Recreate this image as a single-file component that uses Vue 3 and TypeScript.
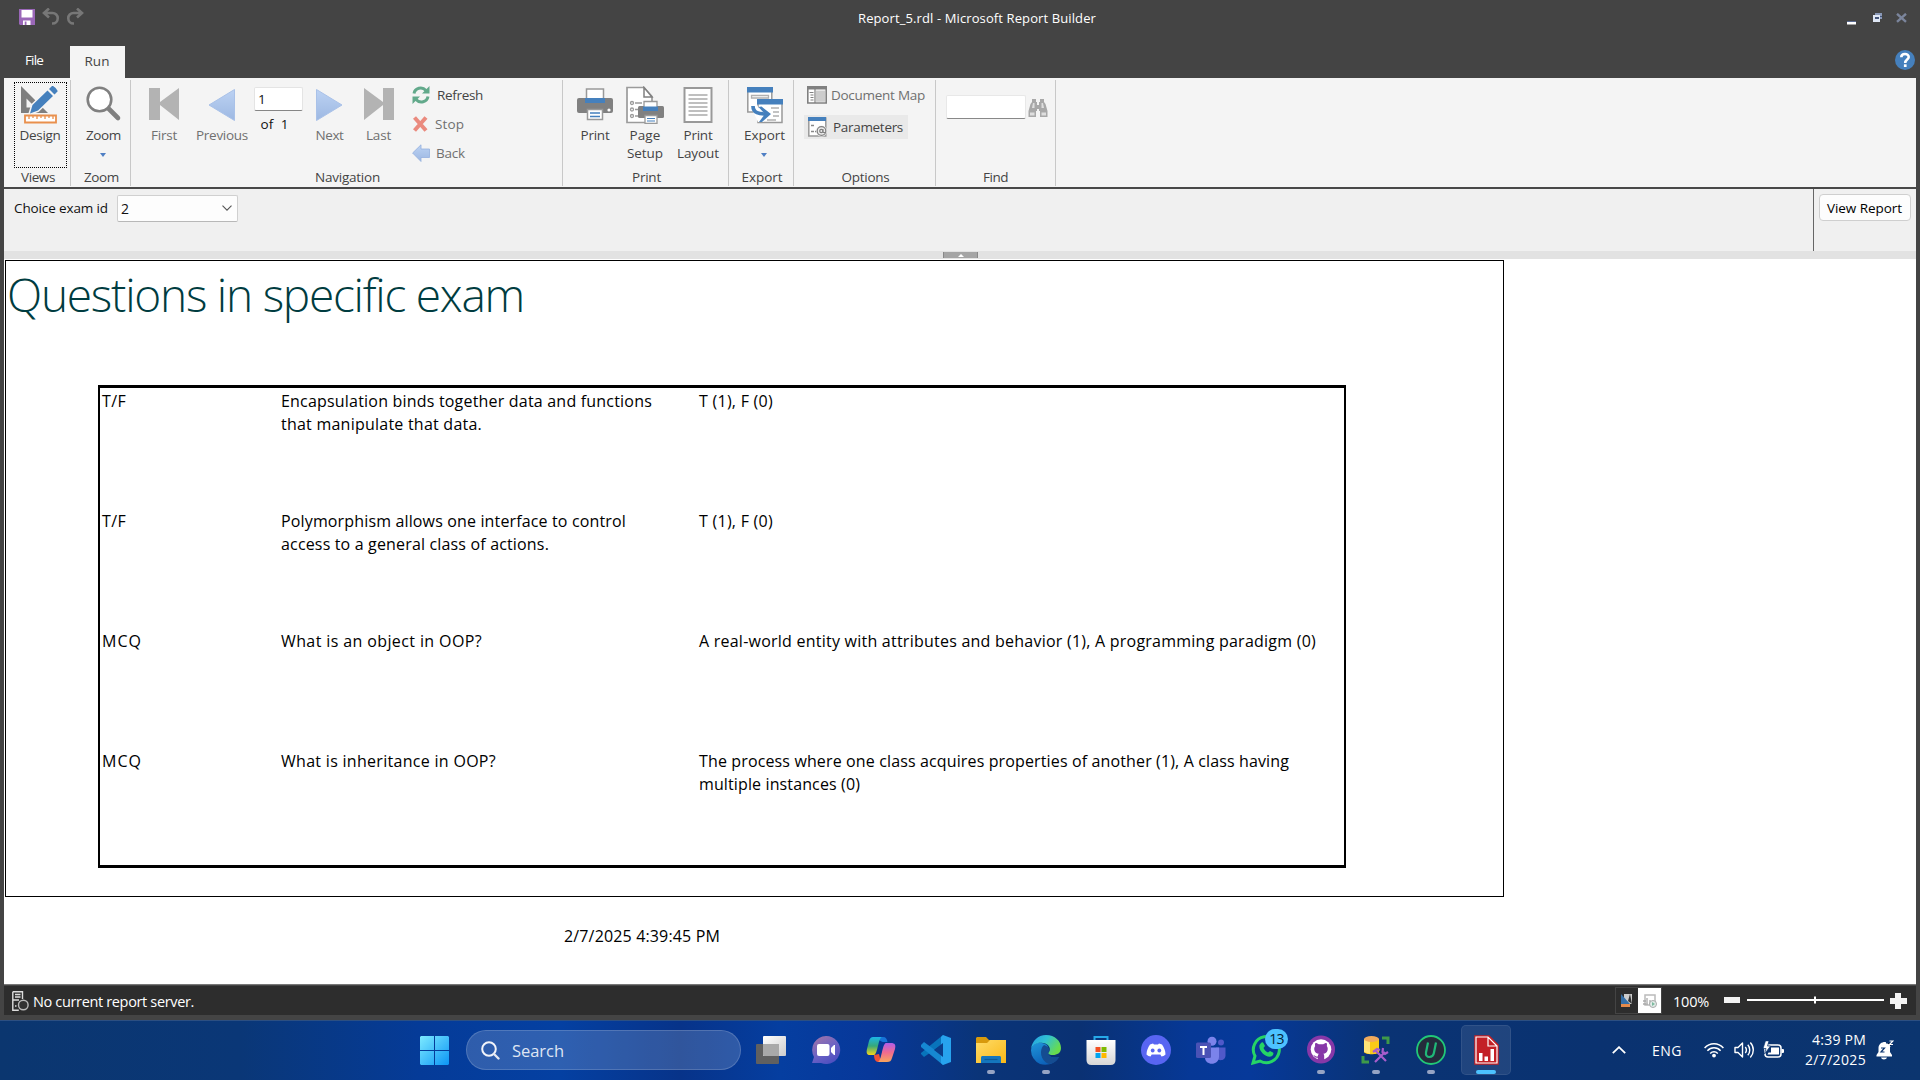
<script setup lang="ts">
interface ReportRow {
  kind: string
  kindWidth: number
  question: [string, number][]
  answers: [string, number][]
}

// Adjusts tracking so that a label occupies its design width in any fallback font.
const vFit = {
  mounted(el: HTMLElement, binding: { value: number }) {
    const count = (el.textContent ?? '').length
    if (!count) return
    const spacing = (binding.value - el.getBoundingClientRect().width) / count
    el.style.letterSpacing = `${spacing.toFixed(3)}px`
  },
}

const pageCount = 'of\u00a0 1'

const rows: ReportRow[] = [
  {
    kind: 'T/F', kindWidth: 24,
    question: [['Encapsulation binds together data and functions', 371], ['that manipulate that data.', 201]],
    answers: [['T (1), F (0)', 74]],
  },
  {
    kind: 'T/F', kindWidth: 24,
    question: [['Polymorphism allows one interface to control', 345], ['access to a general class of actions.', 268]],
    answers: [['T (1), F (0)', 74]],
  },
  {
    kind: 'MCQ', kindWidth: 40,
    question: [['What is an object in OOP?', 201]],
    answers: [['A real-world entity with attributes and behavior (1), A programming paradigm (0)', 617]],
  },
  {
    kind: 'MCQ', kindWidth: 40,
    question: [['What is inheritance in OOP?', 215]],
    answers: [['The process where one class acquires properties of another (1), A class having', 590], ['multiple instances (0)', 161]],
  },
]
</script>

<template>
  <div class="screen">
    <div class="window">
      <header class="titlebar">
        <div class="quick">
          <svg class="save" width="16" height="16" viewBox="0 0 16 16"><path fill="#9a67b8" d="M0 0h16v16H1l-1-1z"/><path fill="#fff" d="M2.500 1h11v7.500h-11zM4 11.500h7.500V16H4z"/><path fill="#9a67b8" d="M5.700 12.500h1.800V16H5.700z"/></svg>
          <svg class="undo" width="18" height="17" viewBox="0 0 18 17"><path fill="none" stroke="#777" stroke-width="2.600" d="M2 5h8.500a5 5 0 0 1 0 10.500H10M7 .5L2 5l5 4.500"/></svg>
          <svg class="redo" width="18" height="17" viewBox="0 0 18 17"><path fill="none" stroke="#777" stroke-width="2.600" d="M16 5H7.500a5 5 0 0 0 0 10.500H8M11 .5L16 5l-5 4.500"/></svg>
        </div>
        <div class="caption"><span v-fit="238" class="t">Report_5.rdl - Microsoft Report Builder</span></div>
        <svg class="winbtns" width="62" height="14" viewBox="0 0 62 14">
          <path fill="#5a6a90" d="M0 8h9v1H0z"/><path fill="#fff" d="M0 9h9v2.500H0z"/>
          <path fill="#8a99b8" d="M28 0h7v6h-7z"/><path fill="#dfe7f5" d="M26 2h7v7h-7z"/><path fill="#445579" d="M28 4h4v2h-4zM33 3h2v1h-2z"/>
          <path fill="none" stroke="#7b859c" stroke-width="2.400" d="M50 .8l9 8M59 .8l-9 8"/>
        </svg>
      </header>

      <nav class="tabs">
        <div class="tab file"><span v-fit="18" class="t">File</span></div>
        <div class="tab run"><span v-fit="25" class="t">Run</span></div>
        <svg class="help" width="20" height="20" viewBox="0 0 20 20"><circle cx="10" cy="10" r="10" fill="#4580bd"/><path fill="none" stroke="#fff" stroke-width="2.600" d="M6.300 7.300C6.300 3 13.700 3 13.700 7c0 2.600-3.500 2.600-3.500 6"/><path fill="#fff" d="M8.900 14.300h2.700V17H8.900z"/></svg>
      </nav>

      <section class="ribbon">
        <div class="group views">
          <div class="body">
            <div class="btn design">
              <svg width="40" height="38" viewBox="0 0 40 38"><path fill="#7f7f7f" fill-rule="evenodd" d="M1 0l27 27H1zM6.500 12.500v9h9z"/><path fill="#4580bd" stroke="#f4f4f4" stroke-width="3" paint-order="stroke" d="M10 27.500l2.500-8.500L27.500 4.500l5.500 5.500-15 14.500zM29 3L32 0c1-1 6.500 4.500 5.500 5.500L34.500 8.500z"/><path fill="#fff" stroke="#e9904d" stroke-width="1.800" d="M5 29.500h31v7H5z"/><path stroke="#e9904d" stroke-width="1.300" d="M9 30v3M13 30v2M17 30v3M21 30v2M25 30v3M29 30v2M33 30v3"/></svg>
              <span v-fit="41" class="t">Design</span>
            </div>
          </div>
          <div class="label"><span v-fit="34" class="t">Views</span></div>
        </div>

        <div class="group zoom">
          <div class="body">
            <div class="btn">
              <svg width="36" height="38" viewBox="0 0 36 38"><path stroke="#808080" stroke-width="4.600" stroke-linecap="round" d="M22 22l10 10"/><circle cx="13.500" cy="13.500" r="11.800" fill="#fff" stroke="#808080" stroke-width="2.600"/></svg>
              <span v-fit="35" class="t">Zoom</span>
              <svg class="drop" width="6" height="4" viewBox="0 0 6 4"><path fill="#4f7fc4" d="M0 0h6L3 4z"/></svg>
            </div>
          </div>
          <div class="label"><span v-fit="35" class="t">Zoom</span></div>
        </div>

        <div class="group navigation">
          <div class="body">
            <div class="btn off first">
              <svg width="30" height="38" viewBox="0 0 30 38"><path fill="#b3b3b3" d="M0 2h11v14L30 2v32L11 19v15H0z"/></svg>
              <span v-fit="26" class="t">First</span>
            </div>
            <div class="btn off previous">
              <svg width="28" height="38" viewBox="0 0 28 38"><defs><linearGradient id="tri" x2="0" y2="1"><stop stop-color="#bcd2f3"/><stop offset="1" stop-color="#9db8e2"/></linearGradient></defs><path fill="url(#tri)" stroke="#a9c1e8" d="M1 19L26.500 3.500v31z"/></svg>
              <span v-fit="52" class="t">Previous</span>
            </div>
            <div class="pager">
              <div class="page-input">1</div>
              <span v-fit="28" class="t count">{{ pageCount }}</span>
            </div>
            <div class="btn off next">
              <svg width="28" height="38" viewBox="0 0 28 38"><path fill="url(#tri)" stroke="#a9c1e8" d="M26 19L.5 3.500v31z"/></svg>
              <span v-fit="28" class="t">Next</span>
            </div>
            <div class="btn off last">
              <svg width="30" height="38" viewBox="0 0 30 38"><path fill="#b3b3b3" d="M30 2H19v14L0 2v32l19-15v15h11z"/></svg>
              <span v-fit="25" class="t">Last</span>
            </div>
            <div class="side">
              <div class="line">
                <svg width="18" height="18" viewBox="0 0 18 18"><g fill="none" stroke="#62a98b" stroke-width="3"><path d="M2 7.500C3 2 10 0 14 4.500M16 10.500C15 16 8 18 4 13.500"/></g><path fill="#62a98b" d="M17.500 0v7.500H10zM.5 18v-7.500H8z"/></svg>
                <span v-fit="46" class="t refresh">Refresh</span>
              </div>
              <div class="line off">
                <svg width="18" height="18" viewBox="0 0 18 18"><path fill="none" stroke="#ea8a7e" stroke-width="4" d="M2.500 2.500l11.500 13M14 2.500l-11.500 13"/></svg>
                <span v-fit="29" class="t stop">Stop</span>
              </div>
              <div class="line off">
                <svg width="18" height="18" viewBox="0 0 18 18"><path fill="url(#tri)" stroke="#94b0de" stroke-width=".8" d="M.6 9L9 .8V5h8.500v8.500H9v4z"/></svg>
                <span v-fit="29" class="t back">Back</span>
              </div>
            </div>
          </div>
          <div class="label"><span v-fit="65" class="t">Navigation</span></div>
        </div>

        <div class="group print">
          <div class="body">
            <div class="btn p1">
              <svg width="36" height="38" viewBox="0 0 36 38"><rect y="12" width="36" height="15" rx="2" fill="#808080"/><path fill="#fff" stroke="#999" stroke-width="1.500" d="M9.500 3h17v11h-17z"/><path fill="#4580bd" d="M8 12h20v5H8z"/><path fill="#fff" stroke="#999" stroke-width="1.500" d="M10.500 23.500h15v10h-15z"/><path stroke="#4580bd" stroke-width="1.400" d="M13 27h10M13 30.500h10"/><circle cx="32" cy="24" r="1.600" fill="#fff"/></svg>
              <span v-fit="29" class="t">Print</span>
            </div>
            <div class="btn p2">
              <svg width="38" height="38" viewBox="0 0 38 38"><path fill="#fff" stroke="#9b9b9b" stroke-width="1.700" d="M1 1.500h17l8 9v26H1z"/><path fill="#fff" stroke="#808080" stroke-width="1.500" d="M18 1.500v9.500h8z"/><g fill="#fff" stroke="#9b9b9b" stroke-width="1.300"><circle cx="6" cy="17" r="1.500"/><circle cx="6" cy="23.500" r="1.500"/><circle cx="6" cy="30" r="1.500"/><path d="M9 17h7M9 23.500h5M9 30h5"/></g><rect x="12" y="20" width="26" height="12" rx="1.500" fill="#808080"/><path fill="#fff" stroke="#999" stroke-width="1.300" d="M18 15.500h13v8H18z"/><path fill="#4580bd" d="M17 20.500h15V25H17z"/><path fill="#fff" stroke="#999" stroke-width="1.300" d="M19 29.500h12v8H19z"/><path stroke="#4580bd" stroke-width="1.200" d="M21 32.500h8M21 35h8"/></svg>
              <span v-fit="31" class="t">Page</span>
              <span v-fit="36" class="t">Setup</span>
            </div>
            <div class="btn p3">
              <svg width="30" height="38" viewBox="0 0 30 38"><path fill="#fff" stroke="#999" stroke-width="2" d="M1.500 2h27v34h-27z"/><path stroke="#aaa" stroke-width="1.500" d="M5.500 9h19M5.500 13h19M5.500 17h19M5.500 21h19M5.500 25h19M5.500 29h19"/></svg>
              <span v-fit="29" class="t">Print</span>
              <span v-fit="42" class="t">Layout</span>
            </div>
          </div>
          <div class="label"><span v-fit="29" class="t">Print</span></div>
        </div>

        <div class="group export">
          <div class="body">
            <div class="btn">
              <svg width="36" height="38" viewBox="0 0 36 38"><path fill="#fff" stroke="#999" stroke-width="1.500" d="M.8 2h24v24H.8z"/><path fill="#4580bd" d="M0 1h26v5.500H0z"/><path fill="none" stroke="#b0b0b0" stroke-width="1.300" d="M4.500 9.500h17V12h-17z"/><path fill="#fff" stroke="#999" stroke-width="1.500" d="M11 14h24v22.500H11z"/><path fill="#4580bd" d="M10 13h26v5.500H10z"/><path stroke="#b0b0b0" stroke-width="1.500" d="M24 22h8M26 26h6M26 30h6M20 34h9"/><path fill="#fff" d="M3 19h7l3 5 5-4 6 8-8 8h-5z"/><path fill="none" stroke="#4580bd" stroke-width="3.700" d="M6 20c0 7 6 8 14 8"/><path fill="#4580bd" d="M14.500 20.500L24 28l-9 8h-3l6-8-6.500-7z"/></svg>
              <span v-fit="41" class="t">Export</span>
              <svg class="drop" width="6" height="4" viewBox="0 0 6 4"><path fill="#4f7fc4" d="M0 0h6L3 4z"/></svg>
            </div>
          </div>
          <div class="label"><span v-fit="41" class="t">Export</span></div>
        </div>

        <div class="group options">
          <div class="body">
            <div class="opt off">
              <svg width="20" height="18" viewBox="0 0 20 18"><path fill="#fff" stroke="#808080" stroke-width="1.600" d="M.8 1h18.400v16H.8z"/><path fill="#808080" d="M0 0h20v3.500H0z"/><path fill="#ccc" d="M9 4.500h9v11.300H9z"/><path fill="none" stroke="#808080" stroke-width="1.200" d="M8 3v14M2.500 6.500h4M3.500 9h3M3.500 11.500h3M3.500 14h3"/></svg>
              <span v-fit="94" class="t">Document Map</span>
            </div>
            <div class="opt on">
              <svg width="19" height="20" viewBox="0 0 19 20"><path fill="#fff" stroke="#999" stroke-width="1.500" d="M.8 1h17v18H.8z"/><path fill="#4580bd" d="M0 0h18v4H0z"/><path stroke="#888" stroke-width="1.500" d="M3 8.500h3M3 14.500h3M7 14.500h2"/><circle cx="13.500" cy="14" r="5.500" fill="#ececec"/><circle cx="13.500" cy="14" r="4.300" fill="none" stroke="#808080" stroke-width="1.200"/><circle cx="13.300" cy="14" r="1.600" fill="none" stroke="#808080" stroke-width="1.200"/><path fill="none" stroke="#808080" d="M15 12v3.500h2"/></svg>
              <span v-fit="70" class="t">Parameters</span>
            </div>
          </div>
          <div class="label"><span v-fit="48" class="t">Options</span></div>
        </div>

        <div class="group find">
          <div class="body">
            <div class="find-input"></div>
            <svg class="bino" width="20" height="18" viewBox="0 0 20 18"><path fill="#a8a8a8" d="M4 0h4v3h1v3h2V3h1V0h4v3l1.500 2L19.500 12v6H12v-6h-1v-2H9v2H8v6H.5v-6L2.500 5 4 3z"/><path fill="#dedede" d="M2 13.500h4.500v3H2zM13.500 13.500H18v3h-4.500zM5 4h1.500v5H4zM13.500 4H15l1 5h-2.500z"/></svg>
          </div>
          <div class="label"><span v-fit="25" class="t">Find</span></div>
        </div>
      </section>

      <section class="params">
        <div class="param-fields">
          <div class="name"><span v-fit="94" class="t">Choice exam id</span></div>
          <div class="select"><span>2</span><svg width="10" height="6" viewBox="0 0 10 6"><path fill="none" stroke="#555" stroke-width="1.100" d="M.5.6L5 5.200 9.500.6"/></svg></div>
        </div>
        <div class="param-action"><button class="view"><span v-fit="75" class="t">View Report</span></button></div>
      </section>
      <div class="splitter"><div class="grip"><svg width="6" height="3" viewBox="0 0 6 3"><path fill="#fff" d="M3 0l3 3H0z"/></svg></div></div>

      <main class="canvas">
        <article class="page">
          <h1><span v-fit="517" class="t">Questions in specific exam</span></h1>
          <div class="grid">
            <div v-for="(row, i) in rows" :key="i" class="row">
              <div class="kind"><span v-fit="row.kindWidth" class="t">{{ row.kind }}</span></div>
              <div class="question"><div v-for="[text, width] in row.question" :key="text"><span v-fit="width" class="t">{{ text }}</span></div></div>
              <div class="answers"><div v-for="[text, width] in row.answers" :key="text"><span v-fit="width" class="t">{{ text }}</span></div></div>
            </div>
          </div>
        </article>
        <div class="stamp"><span v-fit="156" class="t">2/7/2025 4:39:45 PM</span></div>
      </main>

      <footer class="status">
        <svg class="server" width="17" height="20" viewBox="0 0 17 20"><path fill="none" stroke="#ddd" stroke-width="1.400" d="M.8.800h9.700V8M.8.800v18.400h6M3 3.500h5.500M3 6h5.500M1 9h6M3 15h1.500"/><circle cx="11.300" cy="14" r="4.800" fill="#333" stroke="#bbb" stroke-width="1.400"/></svg>
        <span v-fit="161" class="t">No current report server.</span>
        <div class="modes">
          <div class="mode"><svg width="12" height="14" viewBox="0 0 12 14"><path fill="#ccc" d="M3 0h8v10H3z"/><path fill="#356fa8" d="M0 0l9 10H0z"/><path fill="#e48a4b" d="M0 10h9v3H0z"/><path fill="#333" d="M9 0l2 10-4-3z"/></svg></div>
          <div class="mode active"><svg width="14" height="14" viewBox="0 0 14 14"><path fill="#fff" stroke="#bbb" stroke-width="1.500" d="M2 1h10v10H2z"/><path stroke="#aaa" stroke-width="1.300" d="M0 7h3M4 4v5M7 6v4M0 10h5"/><circle cx="10" cy="10" r="3.500" fill="#e2ece8" stroke="#aaa"/><path fill="#7dba9f" d="M9 8l3 2-3 2z"/></svg></div>
        </div>
        <span v-fit="36" class="t pct">100%</span>
        <svg class="slider" width="183" height="16" viewBox="0 0 183 16"><path fill="#f3f3f3" d="M0 4h16v6H0zM166 5h5V0h6v5h6v6h-6v5h-6v-5h-5z"/><path fill="#fff" d="M23 6h137v2H23zM90 3.500h2v7h-2z"/></svg>
      </footer>
    </div>

    <div class="taskbar">
      <svg class="start" width="29" height="29" viewBox="0 0 29 29"><defs><linearGradient id="win" x2="1" y2="1"><stop stop-color="#7deaff"/><stop offset="1" stop-color="#0c95f5"/></linearGradient></defs><path fill="url(#win)" d="M1 0h13v14H0V1zM15 0h13l1 1v13H15zM0 15h14v14H1l-1-1zM15 15h14v13l-1 1H15z"/></svg>
      <div class="search">
        <svg width="19" height="19" viewBox="0 0 19 19"><circle cx="8" cy="8" r="6.800" fill="none" stroke="#f2f4fa" stroke-width="2"/><path stroke="#e4e8f3" stroke-width="2.400" stroke-linecap="round" d="M13 13l4.500 4.500"/></svg>
        <span v-fit="52" class="t">Search</span>
      </div>

      <div class="apps">
        <div class="app"><svg viewBox="0 0 30 30"><defs><linearGradient id="tv" x2="1" y2="1"><stop stop-color="#fff"/><stop offset="1" stop-color="#ccc"/></linearGradient></defs><rect y="9" width="23" height="20" rx="1" fill="#606060"/><rect x="7" y="1" width="23" height="20" rx="1" fill="url(#tv)"/><path fill="#a9a9a9" d="M7 9h16v12H8l-1-1z"/></svg></div>
        <div class="app"><svg viewBox="0 0 30 30"><defs><linearGradient id="chat" x2="0.600" y2="1"><stop stop-color="#a577a4"/><stop offset=".6" stop-color="#6b62c5"/><stop offset="1" stop-color="#4f50c0"/></linearGradient></defs><path fill="url(#chat)" d="M15 1a14 14 0 1 1-5 27H1l2-6A14 14 0 0 1 15 1z"/><rect x="6" y="9" width="12.500" height="12" rx="2" fill="#fff"/><path fill="#fff" d="M20 13l3-3h1v10h-1l-3-3z"/></svg></div>
        <div class="app"><svg viewBox="0 0 30 30"><defs><linearGradient id="cpa" x2="0" y2="1"><stop stop-color="#1bb6e8"/><stop offset=".5" stop-color="#37a879"/><stop offset="1" stop-color="#f5d719"/></linearGradient><linearGradient id="cpb" x2="0" y2="1"><stop stop-color="#b05de8"/><stop offset=".5" stop-color="#f06b90"/><stop offset="1" stop-color="#f7a55c"/></linearGradient></defs><path fill="#1673d8" d="M7 2h10c3 0 4 2 4.500 5h-5z"/><path fill="#ee5037" d="M8 20l5-1 2 8h-3c-3 0-4-4-4-7z"/><path fill="url(#cpa)" d="M7 2h9c-4 1-4 17-8 18H4c-3 0-4-2-3-6l2-8c1-3 2-4 4-4z"/><path fill="url(#cpb)" d="M20 8h5c4 0 5 2 4 6l-3 9c-1 3-2 4-5 4h-9c4-2 4-18 8-19z"/></svg></div>
        <div class="app"><svg viewBox="0 0 30 30"><path fill="#0874bb" d="M0 19l3 3L26 6 22 0 0 18z"/><path fill="#1688d2" d="M0 10l3-3 23 17-4 6L0 12z"/><path fill="#27a3ee" d="M22 0l8 3v24l-8 3-2-2V2z"/><path fill="#0a3d8a" d="M22 8v14l-9-7z"/></svg></div>
        <div class="app"><svg viewBox="0 0 30 30"><defs><linearGradient id="fold" x2="1" y2="1"><stop stop-color="#ffdc68"/><stop offset="1" stop-color="#f9b817"/></linearGradient></defs><path fill="#d89a0c" d="M0 3l1-1h9l3 3h12v5H0z"/><path fill="url(#fold)" d="M0 8h11l3-3h16v23H0z"/><path fill="#1476bd" d="M5 28v-5c0-2 1-2 2-2h16c1 0 2 0 2 2v5z"/><path stroke="#0b5a98" stroke-width="1.200" d="M8.500 24.500h13"/></svg><i class="dot"></i></div>
        <div class="app"><svg viewBox="0 0 30 30"><defs><linearGradient id="ed1" x2="1" y2=".5"><stop stop-color="#239be6"/><stop offset=".5" stop-color="#31c2d2"/><stop offset="1" stop-color="#68dc4d"/></linearGradient><linearGradient id="ed2" x2=".5" y2="1"><stop stop-color="#2096d9"/><stop offset="1" stop-color="#0c5fb8"/></linearGradient></defs><path fill="url(#ed2)" d="M0 15C1 9 6 7 11 8c6 1 7 5 6 8-2 4 3 8 11 6-4 7-12 9-19 7A15 15 0 0 1 0 15z"/><path fill="#154c91" d="M13 10c-5 4-4 16 5 19 4 0 8-3 10-7-8 2-12-2-10-6 1-2 0-4-5-6z"/><path fill="url(#ed1)" d="M0 14C1 6 7 0 15 0c9 0 15 6 15 13 0 5-4 7-8 7-5 0-5-2-4-3 2-2 1-8-6-9-5-1-10 1-12 6z"/></svg><i class="dot"></i></div>
        <div class="app"><svg viewBox="0 0 30 30"><defs><linearGradient id="store" x2="0" y2="1"><stop stop-color="#fff"/><stop offset="1" stop-color="#d6d6d6"/></linearGradient></defs><path fill="none" stroke="#26a9e8" stroke-width="2" d="M8.500 6V2h13v4"/><path fill="url(#store)" d="M.5 5h29v20q0 5-5 5h-19q-5 0-5-5z"/><path fill="#f25022" d="M9.500 12h5v5h-5z"/><path fill="#7fba00" d="M15.500 12h5v5h-5z"/><path fill="#00a4ef" d="M9.500 18h5v5h-5z"/><path fill="#ffb900" d="M15.500 18h5v5h-5z"/></svg></div>
        <div class="app"><svg viewBox="0 0 30 30"><circle cx="15" cy="15" r="15" fill="#5865f2"/><path fill="#fff" d="M9 9.500l3-1 1 1h4l1-1 3 1c2 3 3.500 6 3.500 10-1 1-3 2-4 2l-1.200-2h-8.600l-1.200 2c-1 0-3-1-4-2 0-4 1.500-7 3.500-10z"/><circle cx="11.700" cy="15.500" r="1.900" fill="#5865f2"/><circle cx="18.300" cy="15.500" r="1.900" fill="#5865f2"/></svg></div>
        <div class="app"><svg viewBox="0 0 30 30"><circle cx="16" cy="6.300" r="4.500" fill="#7b83eb"/><circle cx="25" cy="7.500" r="3" fill="#5059c9"/><path fill="#5059c9" d="M20 12.500h9.500v8c0 5-6 6-9 3z"/><path fill="#7b83eb" d="M9 12.500h14v9c0 9.500-14 9.500-14 1z"/><rect y="7.500" width="15" height="15.500" rx="1.500" fill="#4a52b5"/><path fill="#fff" d="M4 11h7v2H8.500v7h-2v-7H4z"/></svg></div>
        <div class="app"><svg viewBox="0 0 30 30"><path fill="none" stroke="#26d466" stroke-width="3" d="M2 28l2-7a13 13 0 1 1 5 5z"/><path fill="#26d466" d="M10 8c1-1 2-1 3 1l1 2-1.500 2c1 2 2.500 3.500 4.500 4.500l2-1.500 3 1.500c1 1 0 3-1 3.500-5 3-14-5-12.500-11z"/></svg><b class="badge">13</b></div>
        <div class="app"><svg viewBox="0 0 30 30"><circle cx="15" cy="14.500" r="14" fill="#8738a8"/><circle cx="15" cy="14.500" r="10.300" fill="#fff"/><path fill="#8738a8" d="M9.500 8c1.300 0 2.300.7 3.200 1.300h4.600C18.200 8.700 19.200 8 20.500 8c.6 1 .6 2 .3 3 1.200 1.500 1 3 .7 4.500-.5 2-2 3-4.200 3.300.7.700.9 1.400.9 2.500V25h-6.400v-2.200c-3 .5-3.500-2-4.500-2.600 2-.3 2.500 2 4.500 1.200 0-1 .3-1.900 1-2.600-2.300-.3-3.900-1.300-4.300-3.300-.3-1.500-.5-3 .7-4.500-.3-1-.3-2 .3-3z"/></svg><i class="dot"></i></div>
        <div class="app"><svg viewBox="0 0 30 30"><path fill="#f9ca18" d="M3 4h15v13c-1 3-14 3-15 0z"/><path fill="#ffe477" d="M3 4h6v15l-6-2z"/><ellipse cx="10.500" cy="4" rx="7.500" ry="3" fill="#f0aa5c"/><path fill="none" stroke="#3f9a49" stroke-width="3" d="M21 3h6v6M2 21v6h6"/><path fill="none" stroke="#a85dcc" stroke-width="2.200" d="M15 16l10 10M24 17L14 27M12 17l4-3 3 1M22 13l-.5 4 2.500 2 3-2"/></svg><i class="dot"></i></div>
        <div class="app"><svg viewBox="0 0 30 30"><circle cx="15" cy="15" r="14" fill="#242b3b" stroke="#22c878" stroke-width="1.800"/><path fill="none" stroke="#20b878" stroke-width="2.200" d="M12 7.500l-2 10c-1 6 7 6 8 0l2-10"/></svg><i class="dot"></i></div>
        <div class="app current"><svg viewBox="0 0 30 30"><path fill="#c32026" stroke="#c32026" stroke-width="1.500" d="M4 1h14l9 9v19H4z"/><path fill="none" stroke="#fff" stroke-width="1.200" d="M5 2h12l9 9v17H5zM17 2v9h9"/><path fill="#fff" d="M8 18h3.500v8H8zM13.500 21.500H17V26h-3.500zM19.500 14H23v12h-3.500z"/></svg><i class="dot wide"></i></div>
      </div>

      <div class="tray">
        <svg class="up" width="14" height="8" viewBox="0 0 14 8"><path fill="none" stroke="#fff" stroke-width="1.800" d="M.8 7.200L7 1.200l6.200 6"/></svg>
        <span v-fit="30" class="t lang">ENG</span>
        <svg class="wifi" width="20" height="16" viewBox="0 0 20 16"><g fill="none" stroke="#fff" stroke-width="1.500"><path d="M.6 6c5-5.800 13.800-5.800 18.800 0"/><path d="M3.400 8.800c3.600-4 9.600-4 13.200 0"/><path d="M6.200 11.400c2.200-2.300 5.400-2.300 7.600 0"/></g><circle cx="10" cy="13.600" r="1.900" fill="#fff"/></svg>
        <svg class="vol" width="21" height="18" viewBox="0 0 21 18"><g fill="none" stroke="#fff" stroke-width="1.400" stroke-linejoin="round"><path d="M1 6.500h3L8.500 2v14L4 11.500H1z"/><path d="M11.300 6c1.300 1.700 1.300 4.300 0 6M13.800 3.800c2.600 3 2.600 7.400 0 10.400M16.300 1.500c4 4.300 4 10.700 0 15"/></g></svg>
        <svg class="bat" width="21" height="18" viewBox="0 0 21 18"><rect x="2" y="4" width="16" height="12" rx="3" fill="none" stroke="#fff" stroke-width="1.500"/><path fill="#fff" d="M8 6.500h8v7H4.500l1-2H8zM18.500 8H20q1 0 1 1v2q0 1-1 1h-1.500z"/><path fill="#fff" stroke="#0b3570" stroke-width=".7" d="M2.500-.2L0 7.500h3L1.500 13 7.500 5h-3L6-.2z"/></svg>
        <div class="clock"><span v-fit="54" class="t">4:39 PM</span><span v-fit="61" class="t">2/7/2025</span></div>
        <svg class="bell" width="18" height="20" viewBox="0 0 18 20"><path fill="#fff" d="M2.500 8C2.500 1 12 0 14 5v7l2 3v1.500H.5V15l2-3zM5 17.500h6c-.5 2.500-5.500 2.500-6 0z"/><path fill="none" stroke="#0b3570" stroke-width="1.200" d="M5 8h3.500L5 12h3.500"/><path stroke="#0b3570" stroke-width="3" d="M10 2h6v5"/><path fill="none" stroke="#fff" stroke-width="1.200" d="M13.500 1H17l-3.500 3.500H17M10.500 6.500h3l-3 3.500h3"/></svg>
      </div>
    </div>
  </div>
</template>

<style>
html, body { margin: 0; overflow: hidden; }
</style>

<style scoped>
* { box-sizing: border-box; }
.screen { width: 1920px; height: 1080px; overflow: hidden; font-family: "Open Sans", "Noto Sans", sans-serif; font-size: 13px; color: #444; }
svg { display: block; flex: none; }
.t { display: inline-block; white-space: pre; flex: none; }
.window { height: 1020px; background: #444; padding: 0 4px; display: flex; flex-direction: column; }

.titlebar { height: 37px; display: flex; align-items: flex-start; }
.quick { display: flex; width: 854px; padding-left: 15px; }
.save { margin-top: 9px; }
.undo { margin: 8px 0 0 7px; }
.redo { margin: 8px 0 0 6px; }
.caption { color: #fff; line-height: 18px; margin-top: 9px; width: 989px; }
.winbtns { margin-top: 13px; }

.tabs { height: 41px; display: flex; align-items: flex-end; font-size: 13.500px; }
.tab { height: 32px; line-height: 31px; text-align: center; }
.file { width: 66px; color: #fff; padding-left: 21px; text-align: left; line-height: 29px; }
.run { width: 55px; background: #f4f4f4; padding-right: 1px; }
.help { margin: 0 1px 8px auto; }

.ribbon { height: 109px; background: #f4f4f4; display: flex; font-size: 13.500px; }
.group { padding-top: 2px; }
.group .body, .group .label { border-right: 1px solid #c8c8c8; display: flex; }
.body { height: 88px; padding-top: 2px; }
.label { height: 18px; line-height: 18px; justify-content: center; padding-left: 2px; }
.find .label { padding-left: 0; }
.views { width: 67px; } .zoom { width: 60px; } .navigation { width: 432px; } .print { width: 166px; }
.export { width: 65px; } .options { width: 142px; } .find { width: 120px; }
.btn { height: 86px; padding-top: 4px; display: flex; flex-direction: column; align-items: center; line-height: 18px; }
.btn > svg:first-child { margin-bottom: 2px; }
.off { color: #707070; }
.design { width: 53px; margin-left: 10px; padding-right: 1px; outline: 1px dotted #000; outline-offset: -1px; }
.zoom .btn { margin-left: 13px; width: 39px; }
.drop { margin-top: 9px; margin-right: 1px; }
.first { width: 42px; margin-left: 12px; }
.previous { width: 58px; margin-left: 8px; }
.pager { width: 49px; margin-left: 3px; padding-top: 5px; color: #111; display: flex; flex-direction: column; align-items: center; }
.page-input { width: 49px; height: 24px; background: #fff; border: 1px solid #e4e4e4; border-bottom-color: #868686; border-radius: 2px; padding-left: 3px; line-height: 23px; margin-bottom: 4px; }
.pager .count { line-height: 18px; margin-right: 8px; }
.next { width: 41px; margin-left: 6px; }
.last { width: 41px; margin-left: 8px; }
.side { margin-left: 13px; padding-top: 4px; display: flex; flex-direction: column; gap: 11px; }
.line { display: flex; height: 18px; align-items: center; line-height: 18px; }
.line .t { margin-bottom: 1px; }
.refresh { margin-left: 7px; } .stop { margin-left: 5px; } .back { margin-left: 6px; }
.p1 { width: 40px; margin-left: 12px; } .p2 { width: 40px; margin-left: 10px; } .p3 { width: 44px; margin-left: 11px; }
.export .btn { width: 43px; margin-left: 14px; }
.options .body { flex-direction: column; padding-left: 10px; }
.opt { display: flex; align-items: center; height: 24px; margin-top: 1px; padding-left: 3px; }
.opt .t { margin-left: 4px; margin-bottom: 1px; }
.opt.on { width: 104px; background: #e9e9e9; margin-top: 8px; padding-left: 4px; }
.opt.on .t { margin-left: 6px; }
.find .body { padding: 15px 0 0 10px; }
.find-input { width: 80px; height: 24px; background: #fff; border: 1px solid #e8e8e8; border-bottom-color: #888; border-radius: 2px; }
.bino { margin: 4px 0 0 2px; }

.params { height: 64px; border-top: 2px solid #484848; background: #f0f0f0; display: flex; color: #111; font-size: 13.500px; }
.param-fields { flex: 1; display: flex; align-items: flex-start; padding: 6px 0 0 10px; }
.name { line-height: 26px; width: 94px; }
.select { margin-left: 9px; width: 121px; height: 27px; background: #fdfdfd; border: 1px solid #d0d0d0; border-bottom-color: #b8b8b8; border-radius: 2px; display: flex; align-items: center; justify-content: space-between; padding: 0 5px 0 3px; font-size: 14px; }
.select svg { margin-top: -1px; }
.param-action { width: 103px; border-left: 1px solid #666; padding: 5px 0 0 5px; }
.view { width: 92px; height: 27px; padding: 0 1px 0 0; background: #fdfdfd; border: 1px solid #cfcfcf; border-radius: 4px; font: inherit; color: #000; }
.splitter { height: 8px; background: #e2e2e2; padding: 1px 0 0 939px; }
.grip { width: 35px; height: 6px; background: #a5a5a5; border: solid #888; border-width: 0 1px; display: flex; justify-content: center; align-items: center; }

.canvas { height: 726px; background: #fff; color: #000; padding: 1px 0 0 1px; font-size: 16px; border-bottom: 1px solid #777; }
.page { width: 1499px; height: 637px; border: 1px solid #000; }
h1 { margin: 0; height: 124px; padding: 0 0 0 1px; font-size: 46px; font-weight: 300; line-height: 67px; color: #003c40; }
.grid { margin-left: 92px; width: 1248px; height: 483px; border: solid #000; border-width: 3px 2px; }
.row { height: 120px; display: flex; line-height: 23px; padding-top: 2px; }
.row > * { flex: none; }
.kind { width: 179px; padding-left: 2px; }
.question { width: 418px; padding-left: 2px; }
.answers { padding-left: 2px; }
.stamp { padding: 27px 0 0 559px; line-height: 24px; }

.status { height: 29px; margin-top: 1px; background: #2d2d2d; display: flex; align-items: center; color: #fff; font-size: 14.500px; padding-left: 8px; }
.status > .t { margin: 1px 0 0 4px; }
.server { margin-top: 1px; }
.modes { display: flex; margin-left: auto; height: 27px; border: 1px solid #444; padding: 0; }
.mode { width: 22px; display: flex; align-items: center; justify-content: center; }
.mode.active { background: #fff; width: 23px; }
.status > .pct { margin-left: 11px; }
.slider { margin: 0 9px 0 15px; }

.taskbar { height: 60px; display: flex; align-items: center; padding-bottom: 1px; border-top: 1px solid #2c4f82; background: linear-gradient(90deg, #0b366f 0, #0a3777 240px, #053b98 420px, #0440a2 560px, #073389 680px, #053ea0 780px, #07389a 870px, #0a3478 980px, #0a3173 1080px, #063896 1190px, #06399a 1250px, #0a3374 1380px, #0a3270 1600px, #0b356f 100%); }
.start { margin-left: 420px; }
.search { margin-left: 17px; width: 275px; height: 40px; border-radius: 20px; background: rgba(255,255,255,.17); border: 1px solid rgba(255,255,255,.16); display: flex; align-items: center; padding-left: 14px; color: #dfe5f3; font-size: 16.500px; }
.search .t { margin-left: 12px; }
.apps { display: flex; margin-left: 5px; gap: 5px; }
.app { position: relative; width: 50px; height: 50px; display: flex; align-items: center; justify-content: center; border-radius: 5px; }
.app svg { width: 30px; height: 30px; }
.current { background: rgba(255,255,255,.09); border: 1px solid rgba(255,255,255,.08); }
.dot { position: absolute; left: 21px; bottom: 1px; width: 8px; height: 4px; border-radius: 2px; background: #96a4c4; }
.dot.wide { left: 14px; bottom: 0; width: 20px; background: #4cc2ff; }
.badge { position: absolute; left: 24px; top: 4px; width: 23px; height: 20px; border-radius: 10px; background: #4cc2ff; color: #071d35; font-size: 14px; letter-spacing: -.8px; font-weight: 400; line-height: 20px; text-align: center; }
.tray { display: flex; align-items: center; margin-left: 101px; color: #fff; font-size: 14px; }
.lang { margin-left: 26px; }
.wifi { margin-left: 22px; } .vol { margin-left: 10px; } .bat { margin-left: 8px; }
.clock { margin-left: 20px; width: 62px; display: flex; flex-direction: column; align-items: flex-end; line-height: 20px; }
.bell { margin-left: 10px; }
</style>
